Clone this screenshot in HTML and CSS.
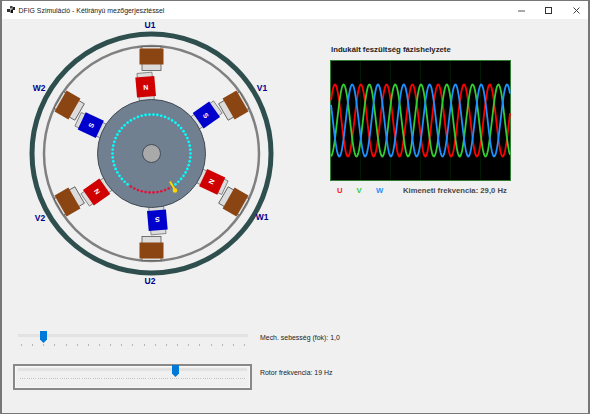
FILE: index.html
```html
<!DOCTYPE html>
<html lang="hu">
<head>
<meta charset="utf-8">
<title>DFIG Szimuláció</title>
<link rel="stylesheet" href="styles.css">
</head>
<body>
<div class="window">
  <header class="titlebar">
    <svg class="app-icon" width="8" height="8" viewBox="0 0 8 8"><rect x="3" y="0" width="2.500" height="2.500" fill="#444"/><rect x="5.500" y="1" width="2.500" height="3" fill="#222"/><rect x="0" y="3" width="3" height="3" fill="#333"/><rect x="3.500" y="3.500" width="2.500" height="3.500" fill="#111"/></svg>
    <span class="title">DFIG Szimuláció - Kétirányú mezőgerjesztéssel</span>
    <div class="controls">
      <svg width="7" height="7" viewBox="0 0 7 7"><path d="M0 4H7" stroke="#555"/></svg>
      <svg width="7" height="7" viewBox="0 0 7 7"><rect x=".5" y=".5" width="6" height="6" fill="none" stroke="#333"/></svg>
      <svg width="7" height="7" viewBox="0 0 7 7"><path d="M.5.500l6 6M6.500.500l-6 6" stroke="#444"/></svg>
    </div>
  </header>
  <main class="client">
    <div class="top">
      <svg class="machine" width="290" height="272" viewBox="0 0 290 272">
        <g transform="translate(149.500 134.500)">
          <circle r="119.500" fill="none" stroke="#2f4f4f" stroke-width="5"/>
          <circle r="107.500" fill="none" stroke="#808080" stroke-width="2.500"/>
          <g id="stator"></g>
          <g id="rotor-poles"></g>
          <circle r="54" fill="#708090" stroke="#444c55" stroke-width="1"/>
          <g id="rotor-dots"></g>
          <circle r="9" fill="#a9a9a9" stroke="#444c55" stroke-width="1"/>
          <path d="M24 37.500L18.500 28" stroke="#ffd700" stroke-width="2"/>
          <circle cx="23.500" cy="37" r="2.300" fill="#ffd700"/>
        </g>
        <g class="coil-label">
          <text x="148" y="9">U1</text>
          <text x="260" y="72">V1</text>
          <text x="37" y="72">W2</text>
          <text x="38" y="202">V2</text>
          <text x="260" y="201">W1</text>
          <text x="148" y="265">U2</text>
        </g>
      </svg>
      <section class="scope-panel">
        <h2 class="scope-title">Indukált feszültség fázishelyzete</h2>
        <svg class="scope" id="scope" width="181" height="121" viewBox="0 0 181 121"></svg>
        <div class="legend">
          <span class="ph-u">U</span>
          <span class="ph-v">V</span>
          <span class="ph-w">W</span>
          <span class="freq">Kimeneti frekvencia: 29,0 Hz</span>
        </div>
      </section>
    </div>
    <div class="slider-row first">
      <div class="slider">
        <div class="track"></div>
        <div class="thumb thumb-mech"></div>
        <div class="ticks ticks-wide"></div>
      </div>
      <span class="slider-label">Mech. sebesség (fok): 1,0</span>
    </div>
    <div class="slider-row second">
      <div class="slider focused">
        <div class="track"></div>
        <div class="thumb thumb-rotor"></div>
        <div class="ticks ticks-dense"></div>
      </div>
      <span class="slider-label">Rotor frekvencia: 19 Hz</span>
    </div>
  </main>
</div>
<script src="script.js"></script>
</body>
</html>
```
FILE: styles.css
```css
* { box-sizing: border-box; }
html, body { margin: 0; height: 100%; }
body { font-family: "Liberation Sans", "Open Sans", sans-serif; background: #f0f0f0; overflow: hidden; }
.window { width: 590px; height: 414px; display: flex; flex-direction: column; border: solid #777; border-width: 1px 2px 1px 2px; }
.titlebar { height: 18px; flex: none; background: #fff; display: flex; align-items: center; padding-left: 5px; }
.app-icon { flex: none; }
.title { margin-left: 3.500px; font-size: 6.900px; color: #222; white-space: nowrap; }
.controls { margin-left: auto; display: flex; gap: 20.500px; padding-right: 8.500px; }
.client { flex: 1; background: #f0f0f0; display: flex; flex-direction: column; }
.top { display: flex; height: 272px; }
.machine { flex: none; }
.coil-label text { font: 700 8.500px "Liberation Sans", sans-serif; fill: #00008b; text-anchor: middle; }
.scope-panel { margin-left: 38px; padding-top: 25px; display: flex; flex-direction: column; }
.scope-title { margin: 0 0 5px; padding-left: 1px; font-size: 7.750px; line-height: 11px; font-weight: 700; color: #1e1e1e; white-space: nowrap; }
.scope { display: block; }
.legend { display: flex; align-items: center; margin-top: 4px; height: 11px; font-size: 7.700px; font-weight: 700; padding-left: 7px; white-space: nowrap; }
.legend span { width: 19.500px; }
.ph-u { color: #ff1a1a; }
.ph-v { color: #32cd32; }
.ph-w { color: #1e90ff; }
.legend .freq { width: auto; margin-left: 7.500px; color: #4a4a4a; }
.slider-row { display: flex; align-items: flex-start; }
.slider { position: relative; width: 230px; height: 14px; flex: none; margin-left: 16px; }
.first { margin-top: 40px; height: 26px; }
.second { margin-top: 7px; }
.slider.focused { width: 239px; height: 26px; margin-left: 11px; border: 2px solid #888; box-shadow: inset 0 0 0 1px #f8f8f8; }
.track { position: absolute; left: 0; right: 0; top: 3px; height: 3px; background: #e2e2e2; }
.focused .track { left: 3px; right: 3px; top: 2px; }
.thumb { position: absolute; top: 0; width: 7px; height: 12px; background: #0078d7; clip-path: polygon(0 0, 100% 0, 100% 70%, 50% 100%, 0 70%); }
.thumb-mech { left: 22px; }
.thumb-rotor { left: 157px; top: -1px; }
.ticks { position: absolute; height: 2px; }
.ticks-wide { left: 3px; right: 3px; top: 13px; background: repeating-linear-gradient(to right, #b5b5b5 0 1px, transparent 1px 11.150px); }
.ticks-dense { left: 5px; right: 5px; top: 12px; height: 1px; background: repeating-linear-gradient(to right, #c2c2c2 0 1px, transparent 1px 2.200px); }
.slider-label { font-size: 6.950px; line-height: 11px; color: #222; white-space: nowrap; margin-left: 12px; }
.first .slider-label { margin-top: 1px; }
.second .slider-label { margin-left: 8px; margin-top: 3px; }
```
FILE: script.js
```js
const NS = "http://www.w3.org/2000/svg";
function el(parent, name, attrs) {
  const e = document.createElementNS(NS, name);
  for (const k in attrs) e.setAttribute(k, attrs[k]);
  parent.appendChild(e);
  return e;
}

const stator = document.getElementById("stator");
for (let a = 0; a < 360; a += 60) {
  const g = el(stator, "g", { transform: "rotate(" + a + ")" });
  el(g, "rect", { x: -9.5, y: -107, width: 19, height: 24, fill: "#dcdcdc", stroke: "#555", "stroke-width": 0.8 });
  el(g, "rect", { x: -12, y: -105, width: 24, height: 16, fill: "#8b4513" });
}

const poles = document.getElementById("rotor-poles");
for (let i = 0; i < 6; i++) {
  const n = i % 2 === 0;
  const g = el(poles, "g", { transform: "rotate(" + (-5 + i * 60) + ")" });
  el(g, "rect", { x: -7.5, y: -81, width: 15, height: 28, fill: "#dcdcdc", stroke: "#666", "stroke-width": 0.7 });
  el(g, "rect", { x: -9.5, y: -77, width: 19, height: 20, fill: n ? "#d00000" : "#0000cd" });
  const t = el(g, "text", { x: 0, y: -64, "text-anchor": "middle", fill: "#fff", "font-size": 7, "font-weight": 700, "font-family": "Liberation Sans, sans-serif" });
  t.textContent = n ? "N" : "S";
}

const dots = document.getElementById("rotor-dots");
const dotCount = 62;
for (let i = 0; i < dotCount; i++) {
  const deg = i * 360 / dotCount;
  const rad = deg * Math.PI / 180;
  const red = deg > 58 && deg < 125;
  el(dots, "circle", {
    cx: (39 * Math.cos(rad)).toFixed(2),
    cy: (39 * Math.sin(rad)).toFixed(2),
    r: 1.35,
    fill: red ? "#dc143c" : "#00ffff"
  });
}

const scope = document.getElementById("scope");
el(scope, "rect", { x: 0, y: 0, width: 181, height: 121, fill: "#000" });
for (const x of [30, 60, 90, 120, 150]) {
  el(scope, "path", { d: "M" + (x + .5) + " 1V120", stroke: "#001a00" });
}
el(scope, "rect", { x: 0.5, y: 0.5, width: 180, height: 120, fill: "none", stroke: "#2e7d32" });
const phases = [["#ff0000", 5], ["#32cd32", 13.6], ["#1e90ff", 22.2]];
for (const [color, peak] of phases) {
  let d = "";
  for (let x = 1; x <= 180; x += 0.5) {
    const y = 60.5 - 36 * Math.cos(2 * Math.PI * (x - peak) / 25.8);
    d += (d ? "L" : "M") + x + " " + y.toFixed(2);
  }
  el(scope, "path", { d, fill: "none", stroke: color, "stroke-width": 1.8 });
}
```
